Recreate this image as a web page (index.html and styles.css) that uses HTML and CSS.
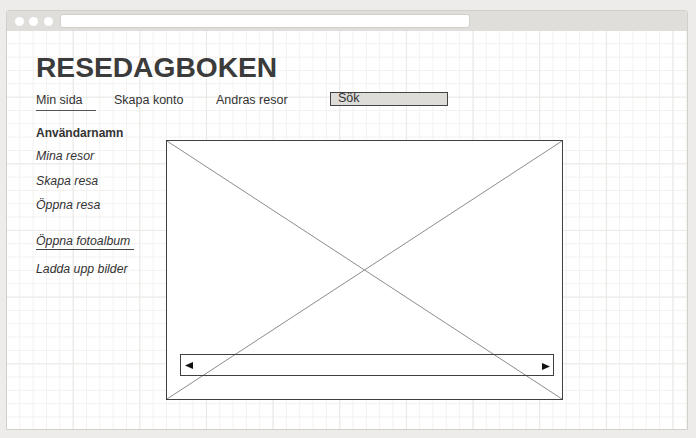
FILE: index.html
```html
<!DOCTYPE html>
<html lang="sv">
<head>
<meta charset="utf-8">
<title>Resedagboken</title>
<link rel="stylesheet" href="styles.css">
</head>
<body>
<div class="window">
  <div class="titlebar">
    <span class="dot"></span>
    <span class="dot"></span>
    <span class="dot"></span>
    <div class="url"></div>
  </div>
  <div class="page">
    <h1 class="title">RESEDAGBOKEN</h1>
    <nav class="nav">
      <a class="nav-item nav-active">Min sida</a>
      <a class="nav-item nav-konto">Skapa konto</a>
      <a class="nav-item nav-andras">Andras resor</a>
      <div class="search">Sök</div>
    </nav>
    <div class="main">
      <aside class="side">
        <div class="side-user">Användarnamn</div>
        <div class="side-item side-first">Mina resor</div>
        <div class="side-item">Skapa resa</div>
        <div class="side-item">Öppna resa</div>
        <div class="side-item side-album"><span class="side-link">Öppna fotoalbum</span></div>
        <div class="side-item side-last">Ladda upp bilder</div>
      </aside>
      <div class="image">
        <svg class="cross" width="100%" height="100%">
          <line x1="0" y1="0" x2="100%" y2="100%"></line>
          <line x1="100%" y1="0" x2="0" y2="100%"></line>
        </svg>
        <div class="scroll">
          <svg class="arrow" width="8" height="7" viewBox="0 0 8 7"><polygon points="0,3.5 8,0 8,7"></polygon></svg>
          <svg class="arrow arrow-right" width="8" height="7" viewBox="0 0 8 7"><polygon points="0,0 8,3.5 0,7"></polygon></svg>
        </div>
      </div>
    </div>
  </div>
</div>
</body>
</html>
```
FILE: styles.css
```css
html, body {
  margin: 0;
  padding: 0;
}
body {
  background: #edecea;
  font-family: "Liberation Sans", Arial, sans-serif;
  color: #333;
  width: 696px;
  height: 438px;
  overflow: hidden;
}
.window {
  margin: 10px 0 0 6px;
  width: 682px;
  height: 420px;
  box-sizing: border-box;
  border: 1px solid #d3d0cb;
  border-radius: 3px 3px 0 0;
  display: flex;
  flex-direction: column;
  background: #fff;
}
.titlebar {
  height: 20px;
  flex: none;
  background: #dfdedb;
  display: flex;
  align-items: center;
  padding-left: 7.5px;
  border-radius: 2px 2px 0 0;
}
.dot {
  width: 9px;
  height: 9px;
  border-radius: 50%;
  background: #fff;
  margin-right: 5.5px;
  flex: none;
}
.url {
  margin-left: 2px;
  width: 410px;
  height: 14px;
  box-sizing: border-box;
  background: #fff;
  border: 1px solid #d3d0cb;
  border-radius: 3px;
}
.page {
  flex: 1;
  padding: 20px 0 0 29px;
  background-color: #fff;
  background-image:
    linear-gradient(to right, #e9e8e5 1px, transparent 1px),
    linear-gradient(to bottom, #ebeae7 1px, transparent 1px),
    linear-gradient(to right, #f2f1ef 1px, transparent 1px),
    linear-gradient(to bottom, #f2f1ef 1px, transparent 1px);
  background-size: 66.667px 66.667px, 66.667px 66.667px, 13.333px 13.333px, 13.333px 13.333px;
  background-position: -1px 0, 0 -1px, -1px 0, 0 -1px;
}
.title {
  margin: 0;
  font-size: 28.2px;
  line-height: 32px;
  font-weight: bold;
  color: #3b3b3b;
}
.nav {
  margin-top: 10px;
  display: flex;
  align-items: flex-start;
  font-size: 12.5px;
  line-height: 14px;
  height: 18px;
}
.nav-item {
  color: #333;
  flex: none;
}
.nav-active {
  width: 60px;
  padding-bottom: 3px;
  border-bottom: 1px solid #555;
  margin-right: 18px;
}
.nav-konto {
  width: 102px;
}
.nav-andras {
  width: 114px;
}
.search {
  width: 118px;
  height: 14px;
  box-sizing: border-box;
  margin-top: -1px;
  border: 1px solid #444;
  background: #dddcd8;
  padding-left: 7px;
  line-height: 11px;
  color: #333;
}
.main {
  margin-top: 14px;
  display: flex;
  align-items: flex-start;
}
.side {
  width: 130px;
  flex: none;
  font-size: 12.3px;
  color: #333;
}
.side-user {
  font-weight: bold;
  font-size: 12px;
  line-height: 16px;
}
.side-item {
  font-style: italic;
  line-height: 16px;
  margin-top: 8.5px;
}
.side-first {
  margin-top: 7px;
}
.side-album {
  margin-top: 19.5px;
}
.side-link {
  display: inline-block;
  padding-right: 4px;
  border-bottom: 1px solid #444;
}
.side-last {
  margin-top: 11.5px;
}
.image {
  margin-top: 15px;
  width: 397px;
  height: 260px;
  box-sizing: border-box;
  border: 1px solid #3f3f3f;
  position: relative;
  background: #fff;
  flex: none;
}
.cross {
  position: absolute;
  left: 0;
  top: 0;
  display: block;
}
.cross line {
  stroke: #8c8c8c;
  stroke-width: 1;
}
.scroll {
  position: absolute;
  left: 13px;
  top: 213px;
  width: 374px;
  height: 22px;
  box-sizing: border-box;
  border: 1px solid #3f3f3f;
  display: flex;
  justify-content: space-between;
  align-items: center;
  padding: 0 3px 0 4px;
}
.arrow {
  display: block;
  fill: #111;
}
.arrow-right {
  margin-top: 3px;
}
```
